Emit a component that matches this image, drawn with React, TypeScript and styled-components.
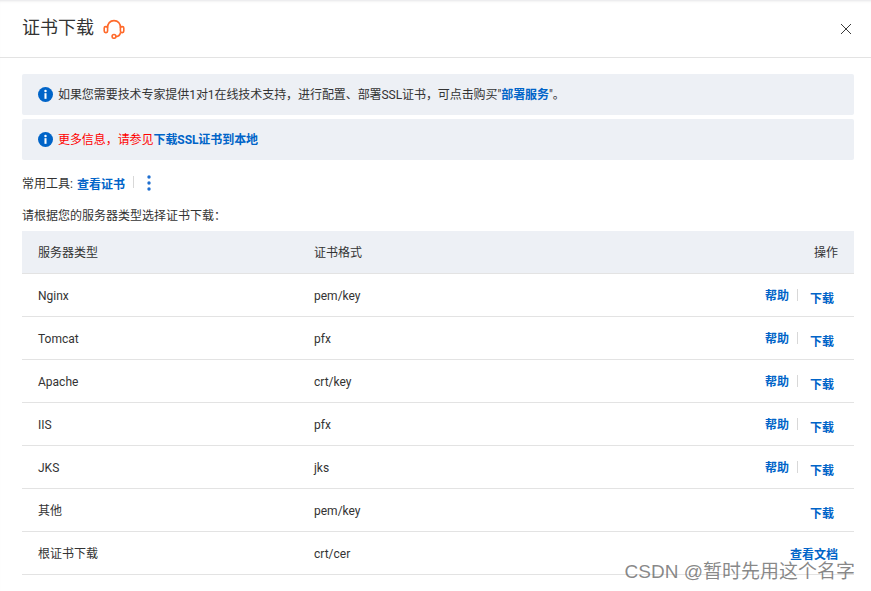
import React from "react";
import styled, { createGlobalStyle } from "styled-components";

const Global = createGlobalStyle`
  html, body { margin: 0; padding: 0; background: #fff; }
  body { font-family: Roboto, "Noto Sans CJK SC", sans-serif; font-size: 12px; color: #333; }
`;

const Page = styled.div`
  position: relative;
  width: 871px;
  height: 591px;
  overflow: hidden;
  background: #fff;
  box-shadow: inset 0 3px 3px -2px #e4e4e6;
`;
const Header = styled.header`
  height: 57px;
  border-bottom: 1px solid #e3e3e3;
  padding: 0 19px 0 22px;
  display: flex;
  align-items: center;
`;
const Title = styled.h1`
  margin: -2px 9px 0 0;
  font-size: 18px;
  font-weight: 400;
  line-height: 24px;
  color: #333;
`;
const Spacer = styled.div`flex: 1;`;
const CloseButton = styled.button`
  border: 0;
  background: none;
  padding: 0;
  width: 12px;
  height: 12px;
  display: flex;
`;
const Body = styled.main`
  padding: 16px 17px 0 22px;
`;
const Alert = styled.div<{ $mb?: number }>`
  height: 41px;
  margin-bottom: ${(p) => p.$mb ?? 0}px;
  padding: 0 16px;
  background: #edf0f5;
  border-radius: 2px;
  display: flex;
  align-items: center;
  gap: 5px;
  color: #333;
  line-height: 20px;
  letter-spacing: -0.07px;
`;
const Danger = styled.span`color: #f00;`;
const Link = styled.a<{ $drop?: number; $raise?: number }>`
  color: #0064c8;
  font-weight: 700;
  font-size: 12px;
  margin-top: ${(p) => p.$drop ?? 0}px;
  margin-bottom: ${(p) => p.$raise ?? 0}px;
`;
const Tools = styled.div`
  height: 22px;
  margin-top: 12px;
  display: flex;
  align-items: center;
`;
const ToolLabel = styled.span`margin: -2px 4px 0 0;`;
const VDivider = styled.i<{ $mx: string }>`
  display: inline-block;
  width: 1px;
  height: 12px;
  background: #d8d8d8;
  margin: ${(p) => p.$mx};
`;
const Hint = styled.p`
  margin: 12px 0 5px;
  line-height: 20px;
`;
const Row = styled.div<{ $head?: boolean }>`
  height: 43px;
  box-sizing: border-box;
  display: grid;
  grid-template-columns: 276px 1fr auto;
  align-items: center;
  padding: 0 16px;
  border-bottom: 1px solid #e3e3e3;
  background: ${(p) => (p.$head ? "#edf0f5" : "#fff")};
`;
const Cell = styled.span<{ $latin?: boolean }>`
  padding: ${(p) => (p.$latin ? "2px 0 0" : "0 0 2px")};
`;
const Actions = styled.div`
  display: flex;
  align-items: center;
  justify-content: flex-end;
`;
const DownloadCell = styled(Actions)`
  padding-right: 4px;
`;
const Watermark = styled.div`
  position: absolute;
  right: 16px;
  bottom: 7px;
  font-family: "Liberation Sans", "Noto Sans CJK SC", sans-serif;
  font-size: 19px;
  line-height: 24px;
  color: rgba(90, 90, 90, 0.72);
  white-space: nowrap;
`;

const InfoIcon = () => (
  <svg width="15" height="15" viewBox="0 0 16 16" aria-hidden="true">
    <circle cx="8" cy="8" r="8" fill="#0064c8" />
    <circle cx="8" cy="4.2" r="1.3" fill="#fff" />
    <rect x="6.9" y="6.6" width="2.2" height="6" fill="#fff" />
  </svg>
);
const HeadsetIcon = () => (
  <svg width="22" height="20" viewBox="0 0 22 20" fill="none" stroke="#ff6a2b" strokeWidth="1.6" aria-hidden="true">
    <path d="M4.5 9 C4.5 4.5 7 1.6 11 1.6 C15 1.6 17.5 4.5 17.5 9" />
    <rect x="1.2" y="7.6" width="3.4" height="6" rx="1.5" />
    <rect x="17.4" y="7.6" width="3.4" height="6" rx="1.5" />
    <path d="M17.5 13.5 C17 16.2 15.5 17.4 13 17.6" />
    <circle cx="11" cy="17.4" r="1.9" />
  </svg>
);
const CloseIcon = () => (
  <svg width="12" height="12" viewBox="0 0 12 12" stroke="#3a3a3a" strokeWidth="1" aria-hidden="true">
    <path d="M1 1 L11 11 M11 1 L1 11" />
  </svg>
);
const DotsIcon = () => (
  <svg width="4" height="16" viewBox="0 0 4 16" fill="#1f6fd0" aria-hidden="true">
    <circle cx="2" cy="2" r="1.7" />
    <circle cx="2" cy="8" r="1.7" />
    <circle cx="2" cy="14" r="1.7" />
  </svg>
);

const rows = [
  { name: "Nginx", latin: true, format: "pem/key", help: true },
  { name: "Tomcat", latin: true, format: "pfx", help: true },
  { name: "Apache", latin: true, format: "crt/key", help: true },
  { name: "IIS", latin: true, format: "pfx", help: true },
  { name: "JKS", latin: true, format: "jks", help: true },
  { name: "其他", latin: false, format: "pem/key", help: false },
];

export default function App() {
  return (
    <Page>
      <Global />
      <Header>
        <Title>证书下载</Title>
        <HeadsetIcon />
        <Spacer />
        <CloseButton aria-label="关闭"><CloseIcon /></CloseButton>
      </Header>
      <Body>
        <Alert $mb={4}>
          <InfoIcon />
          <span>如果您需要技术专家提供1对1在线技术支持，进行配置、部署SSL证书，可点击购买"<Link>部署服务</Link>"。</span>
        </Alert>
        <Alert>
          <InfoIcon />
          <span><Danger>更多信息，请参见</Danger><Link>下载SSL证书到本地</Link></span>
        </Alert>
        <Tools>
          <ToolLabel>常用工具:</ToolLabel>
          <Link $drop={1}>查看证书</Link>
          <VDivider $mx="-2px 13px 0 8px" />
          <DotsIcon />
        </Tools>
        <Hint>请根据您的服务器类型选择证书下载：</Hint>
        <Row $head>
          <Cell>服务器类型</Cell>
          <Cell>证书格式</Cell>
          <Cell>操作</Cell>
        </Row>
        {rows.map((r) => (
          <Row key={r.name}>
            <Cell $latin={r.latin}>{r.name}</Cell>
            <Cell $latin>{r.format}</Cell>
            <DownloadCell>
              {r.help && <Link $raise={2}>帮助</Link>}
              {r.help && <VDivider $mx="0 12px 0 8px" />}
              <Link $drop={4}>下载</Link>
            </DownloadCell>
          </Row>
        ))}
        <Row>
          <Cell>根证书下载</Cell>
          <Cell $latin>crt/cer</Cell>
          <Actions><Link>查看文档</Link></Actions>
        </Row>
      </Body>
      <Watermark>CSDN @暂时先用这个名字</Watermark>
    </Page>
  );
}
